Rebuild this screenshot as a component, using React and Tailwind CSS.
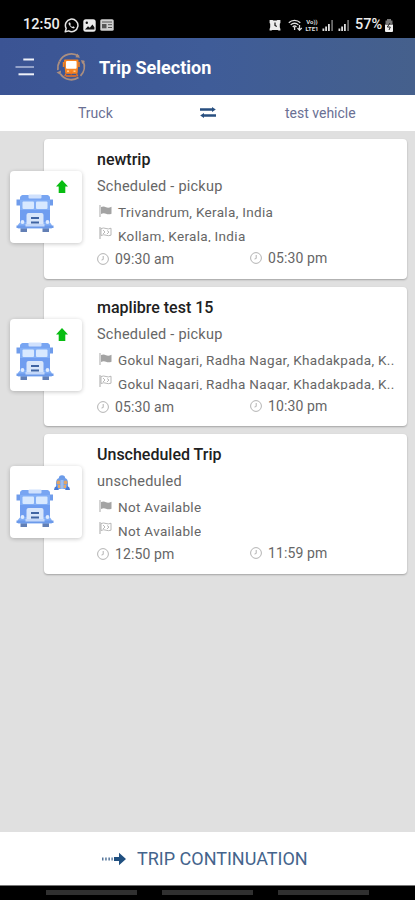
import React from 'react';

const TRIPS = [
  { name: 'newtrip', status: 'Scheduled - pickup', from: 'Trivandrum, Kerala, India', to: 'Kollam, Kerala, India', start: '09:30 am', end: '05:30 pm', scheduled: true },
  { name: 'maplibre test 15', status: 'Scheduled - pickup', from: 'Gokul Nagari, Radha Nagar, Khadakpada, K..', to: 'Gokul Nagari, Radha Nagar, Khadakpada, K..', start: '05:30 am', end: '10:30 pm', scheduled: true },
  { name: 'Unscheduled Trip', status: 'unscheduled', from: 'Not Available', to: 'Not Available', start: '12:50 pm', end: '11:59 pm', scheduled: false },
];

function WhatsAppIcon() {
  return (
    <svg className="w-[15px] h-[15px]" viewBox="0 0 24 24" fill="none" stroke="#e6e6e6" strokeWidth="2.4">
      <path d="M2 22l1.5-5.4A10 10 0 1 1 7.5 20.6z" strokeLinejoin="round" />
      <path d="M8 7.2c-.9.8-1 2.2.2 4.1 1.4 2.3 3.4 4.3 5.9 5.2 1.500.4 2.800-.3 3-1.800l-2.500-1.500-1.300 1.200c-1.600-.7-2.700-1.800-3.400-3.300l1-1.200-1.200-2.700z" fill="#e6e6e6" stroke="none" />
    </svg>
  );
}

function GalleryIcon() {
  return (
    <svg className="w-[13px] h-[13px]" viewBox="0 0 13 13">
      <rect x="0.3" y="0.3" width="12.4" height="12.4" rx="2.5" fill="#ececec" />
      <path d="M2 10.500l3-3.300 1.800 1.600 2.600-3.300 2 2.700v2.300z" fill="#111" />
      <circle cx="3.8" cy="3.7" r="1.2" fill="#111" />
    </svg>
  );
}

function NewsIcon() {
  return (
    <svg className="w-[14px] h-[12px]" viewBox="0 0 14 12">
      <rect x="0.3" y="0.3" width="13.4" height="11.4" rx="1.5" fill="#cfcfcf" />
      <path d="M2 3h10M8 5.700h4M8 8.500h4" stroke="#555" strokeWidth="1" />
      <rect x="2" y="5" width="4.5" height="4.3" fill="#555" />
    </svg>
  );
}

function AlarmIcon() {
  return (
    <svg className="w-[12px] h-[12px]" viewBox="0 0 12 12">
      <path d="M0.6 1h3l.8.6h3.200l.8-.6h3v3l-.6.8v3.400l.6 1.800v1.500H9.600L8.700 11H3.300l-.9.500H.6V10l.6-1.800V4.800L.6 4z" fill="#ededed" />
      <path d="M6 3.500v3l1.800 1" fill="none" stroke="#111" strokeWidth="1.2" />
    </svg>
  );
}

function WifiIcon() {
  return (
    <svg className="w-[15px] h-[12px]" viewBox="0 0 15 12" fill="none" stroke="#dedede" strokeWidth="1.3">
      <path d="M.8 3.700C4 .5 9 .5 12.300 3.700M2.700 5.900c2.200-2.200 5.500-2.200 7.700 0M4.700 8c1.100-1.100 2.700-1.100 3.800 0" />
      <path d="M6.600 8v3M11.500 6v5M9.500 9l2 2.200L13.800 9" />
    </svg>
  );
}

function SignalIcon() {
  return (
    <svg className="w-[12px] h-[12px]" viewBox="0 0 12 12">
      <path d="M.5 9.500h1.800V12H.5zM3.200 7.500H5V12H3.200zM6 5h1.800v7H6z" fill="#dedede" />
      <path d="M9.200 1H11v11H9.200z" fill="#6b6b6b" />
    </svg>
  );
}

function BatteryIcon() {
  return (
    <svg className="w-[10px] h-[13px]" viewBox="0 0 10 13">
      <path d="M3 0h4v1.500h1.500V5h-7V1.500H3z" fill="#777" />
      <path d="M1 5.500h8V12q0 1-1 1H2q-1 0-1-1z" fill="#f2f2f2" />
      <path d="M6 4L3.300 8h3L5 11" fill="none" stroke="#222" />
    </svg>
  );
}

function StatusBar() {
  return (
    <div className="flex h-[38px] shrink-0 items-center bg-black pt-[12px] pl-[23px] text-[#ededed]">
      <span className="w-[37px] whitespace-nowrap text-[14.5px] leading-none font-medium">12:50</span>
      <div className="ml-[4px] flex items-center gap-[4px]">
        <WhatsAppIcon />
        <GalleryIcon />
        <NewsIcon />
      </div>
      <div className="ml-[155px] flex items-center">
        <AlarmIcon />
        <div className="ml-[7px] flex"><WifiIcon /></div>
        <div className="ml-[2px] flex w-[14px] flex-col items-center text-[6px] leading-[7px] font-bold text-[#dedede]">
          <span>Vo))</span>
          <span>LTE1</span>
        </div>
        <div className="ml-[3px] flex gap-[4px]"><SignalIcon /><SignalIcon /></div>
      </div>
      <span className="ml-[5px] w-[29px] whitespace-nowrap text-[14.5px] leading-none font-medium">57%</span>
      <BatteryIcon />
    </div>
  );
}

function Logo() {
  return (
    <svg className="w-[30px] h-[30px]" viewBox="0 0 30 30">
      <g fill="none" stroke="#ab8f80" strokeWidth="1.8">
        <path d="M3.500 9.500A13 13 0 0 1 23 4.500" />
        <path d="M27 9A13 13 0 0 1 24.500 23.800" />
        <path d="M22.500 25.500A13 13 0 0 1 4.500 22" />
        <path d="M1.900 18A13 13 0 0 1 3.500 9.500" />
      </g>
      <path d="M21.500 1.500l2.500 4.300-4.600-.5zM.5 20.500l4.500-2-.3 4.500zM25 8l4 1-2.800 3z" fill="#ab8f80" />
      <path d="M8 8.500q0-1 1-1h12.500q1 0 1 1l-.8 12q0 1.200-1.200 1.200h-10q-1.200 0-1.300-1.200z" fill="#f78422" />
      <path d="M7.500 10v5M23 10v5" stroke="#f78422" strokeWidth="1.4" />
      <rect x="10" y="9" width="10.6" height="7.8" rx="1" fill="#fff" />
      <path d="M11 19.200h2M17.500 19.200h2" stroke="#ffd6ae" strokeWidth="1.2" />
      <path d="M10 21.500l-1.200 2.800M20.500 21.500l1.200 2.800M10 24h10.500M15.200 19.500v3" stroke="#f4711c" strokeWidth="1.3" />
    </svg>
  );
}

function Header() {
  return (
    <header className="flex h-[57px] shrink-0 items-center bg-linear-to-r from-[#3b5494] via-[#3f5c98] to-[#45608c]">
      <svg className="ml-[15px] h-[20px] w-[20px]" viewBox="0 0 20 20">
        <path d="M8.300 2.500H19" stroke="#eef1f8" strokeWidth="2" />
        <path d="M.5 10H19" stroke="#aab6d6" strokeWidth="1.6" />
        <path d="M3.500 17.300H19" stroke="#eef1f8" strokeWidth="2" />
      </svg>
      <div className="ml-[21px]"><Logo /></div>
      <h1 className="ml-[13px] pt-[2px] text-[18px] leading-none font-bold whitespace-nowrap text-white">Trip Selection</h1>
    </header>
  );
}

function VehicleBar() {
  return (
    <div className="flex h-[36px] shrink-0 items-center bg-white text-[14px] leading-none text-[#6a7094]">
      <span className="ml-[78px] w-[35px] whitespace-nowrap">Truck</span>
      <svg className="ml-[87px] h-[12px] w-[16px]" viewBox="0 0 16 12">
        <path d="M0 2.500h13M3 8.500h13" stroke="#284f80" strokeWidth="2.4" />
        <path d="M12 0l3.800 2.500L12 5zM4 6L.2 8.500 4 11z" fill="#284f80" />
      </svg>
      <span className="ml-[69px] whitespace-nowrap">test vehicle</span>
    </div>
  );
}

function BusIcon() {
  return (
    <svg className="w-[40px] h-[40px]" viewBox="0 0 40 40">
      <path d="M1.500 5.500h3.500v6H1.500zM34.500 5.500h3.500v6h-3.500z" fill="#6f9ceb" />
      <path d="M5.500 33h6.500v5H5.500zM27.500 33h6.500v5h-6.500z" fill="#627fb5" />
      <path d="M5 4.500Q5 1.500 8 1h24q3 .5 3 3.500v24l1.800 2.500v3.500H2.800V31L5 28.500z" fill="#83aff6" />
      <path d="M5 4.500Q5 1.500 8 1h24q3 .5 3 3.500V6H5z" fill="#78a5f2" />
      <rect x="13.500" y=".5" width="13" height="4" rx="1" fill="#d0e1fd" />
      <rect x="7.500" y="7.500" width="11.500" height="7.500" rx="1" fill="#d8e9ff" />
      <rect x="21" y="7.500" width="11.500" height="7.500" rx="1" fill="#d8e9ff" />
      <path d="M5 16h30v12H5z" fill="#6f9df0" />
      <rect x="11.500" y="19" width="17" height="12.500" rx="2" fill="#d8e6fb" />
      <path d="M16 24h8M16 28.500h8" stroke="#3f64a3" strokeWidth="2" />
      <circle cx="7.500" cy="28" r="1.900" fill="#deebff" />
      <circle cx="32.500" cy="28" r="1.900" fill="#deebff" />
      <path d="M1.500 31.500h37V34h-37z" fill="#6c9aea" />
      <path d="M10.500 30h19v2.500h-19z" fill="#c4d8fa" />
    </svg>
  );
}

function UpArrow() {
  return (
    <svg className="w-[12px] h-[13px]" viewBox="0 0 12 13">
      <path d="M6 0l6 6.500H9.300V13H2.700V6.500H0z" fill="#08bd12" />
    </svg>
  );
}

function Passengers() {
  return (
    <svg className="w-[16px] h-[16px]" viewBox="0 0 16 16">
      <circle cx="8" cy="3.5" r="3.2" fill="#6b9be9" />
      <path d="M2 14V8q0-4.500 3.500-5h5Q14 3.500 14 8v6z" fill="#6f9de8" />
      <circle cx="4.5" cy="7.5" r="2" fill="#dfa467" />
      <circle cx="11.5" cy="7.5" r="2" fill="#dfa467" />
      <path d="M4 10h2.500v3H4zM9.500 10H12v3H9.500z" fill="#e6a967" />
      <path d="M6.500 5h3v9h-3z" fill="#9dbdf0" />
      <path d="M0 15q0-3 2.500-4L5 15zM16 15q0-3-2.500-4L11 15z" fill="#4778d2" />
    </svg>
  );
}

function FlagIcon({ checkered }) {
  return (
    <svg className="w-[13px] h-[12px] shrink-0" viewBox="0 0 13 12">
      <path d="M1 0v12" stroke="#b0b0b0" strokeWidth="1.1" />
      {checkered ? (
        <g fill="none" stroke="#b0b0b0" strokeWidth=".9">
          <path d="M2 1.500q2.700-1 5 0t5-.3v7q-2.700 1-5 0t-5 .3z" />
          <path d="M4 3l2 2-2 2M8 3.500l2 1.500-2 2" />
        </g>
      ) : (
        <path d="M2 2q2.700-1 5 .2t5.500-.5v7q-3 1-5.500 0T2 9z" fill="#a3a3a3" />
      )}
    </svg>
  );
}

function Time({ value }) {
  return (
    <div className="flex items-center">
      <svg className="w-[12px] h-[12px]" viewBox="0 0 12 12" fill="none" stroke="#b3b3b3">
        <circle cx="6" cy="6" r="5.4" />
        <path d="M6.200 3v3.500L4.500 7" />
      </svg>
      <span className="ml-[6px] whitespace-nowrap">{value}</span>
    </div>
  );
}

function TripCard({ trip }) {
  return (
    <article className="relative h-[139.5px] rounded-[4px] bg-white pt-[10px] pl-[53px] shadow-[0_1px_2px_rgba(0,0,0,0.28)]">
      <div className="absolute top-[32px] -left-[34px] h-[72px] w-[72px] rounded-[4px] bg-white shadow-[0_1px_4px_rgba(0,0,0,0.22)]">
        <div className="absolute top-[23px] left-[5px]"><BusIcon /></div>
        <div className="absolute top-[9px] left-[44px] flex w-[16px] justify-center">{trip.scheduled ? <UpArrow /> : <Passengers />}</div>
      </div>
      <h2 className="h-[22px] text-[16px] leading-[22px] font-medium whitespace-nowrap text-[#202020]">{trip.name}</h2>
      <p className="mt-[5px] h-[21px] text-[14.5px] leading-[21px] tracking-[0.23px] whitespace-nowrap text-[#666666]">{trip.status}</p>
      <div className="mt-[6px] flex h-[18px] items-center text-[13.5px] tracking-[0.32px] text-[#666666]">
        <div className="mb-[2px] ml-[2px]"><FlagIcon /></div>
        <span className="ml-[6px] leading-[18px] whitespace-nowrap">{trip.from}</span>
      </div>
      <div className="mt-[6px] flex h-[16px] items-start text-[13.5px] tracking-[0.32px] text-[#666666]">
        <div className="ml-[2px]"><FlagIcon checkered /></div>
        <span className="ml-[6px] h-[15px] overflow-hidden leading-[18px] whitespace-nowrap">{trip.to}</span>
      </div>
      <div className="flex text-[14px] leading-[18px] tracking-[0.1px] text-[#666666]">
        <div className="mt-[7px] w-[153px]"><Time value={trip.start} /></div>
        <div className="mt-[6px]"><Time value={trip.end} /></div>
      </div>
    </article>
  );
}

export default function App() {
  return (
    <div className="flex h-[900px] w-[415px] flex-col overflow-hidden bg-[#e0e0e0] font-['Roboto',sans-serif]">
      <StatusBar />
      <Header />
      <VehicleBar />
      <main className="flex flex-1 flex-col gap-[8px] pt-[8px] pr-[8px] pl-[44px]">
        {TRIPS.map((t) => <TripCard key={t.name} trip={t} />)}
      </main>
      <button className="flex h-[53px] shrink-0 items-center bg-white pt-[1px] pl-[102px] text-[#44648c]">
        <svg className="w-[25px] h-[14px]" viewBox="0 0 25 14">
          <path d="M0 5.500h1.500v3H0zM3.200 5.500h1.500v3H3.200zM6.400 5.500h1.500v3H6.400zM9.400 5.500h1.400v3H9.400z" fill="#55759a" />
          <path d="M12 5h5V.8L24 7l-7 6.200V9h-5z" fill="#205080" />
        </svg>
        <span className="ml-[10px] text-[18px] leading-none whitespace-nowrap">TRIP CONTINUATION</span>
      </button>
      <nav className="flex h-[15px] shrink-0 items-start gap-[25px] border-t border-[#777] bg-black pt-[4px] pl-[46px]">
        <div className="h-[5px] w-[91px] bg-[#303030]" />
        <div className="h-[5px] w-[91px] bg-[#303030]" />
        <div className="h-[5px] w-[91px] bg-[#303030]" />
      </nav>
    </div>
  );
}
